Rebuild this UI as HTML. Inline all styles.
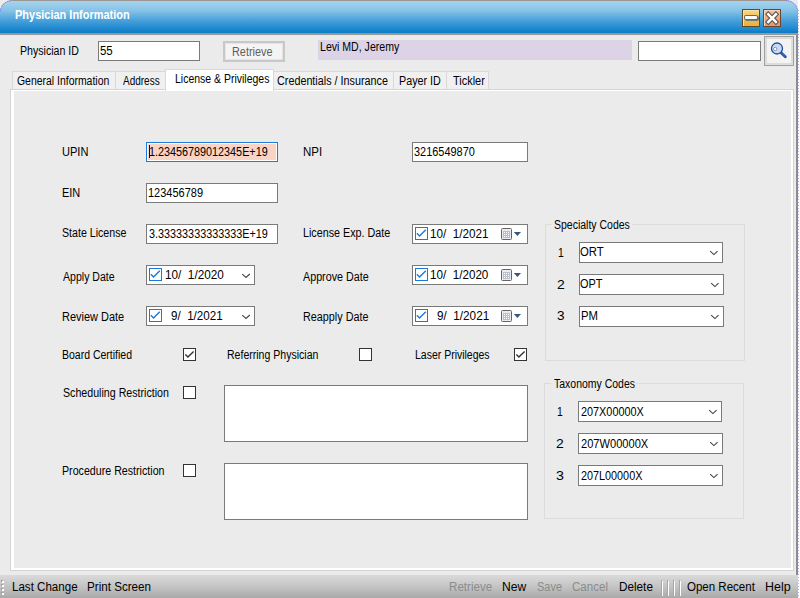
<!DOCTYPE html>
<html><head><meta charset="utf-8">
<style>
*{margin:0;padding:0;box-sizing:border-box}
html,body{width:800px;height:598px;overflow:hidden;background:#fff}
body{font-family:"Liberation Sans",sans-serif;font-size:12px;color:#000;position:relative}
.a{position:absolute}
.t{position:absolute;white-space:pre;line-height:16px;font-size:12px;transform-origin:0 0}
.tb{position:absolute;background:#fff;border:1px solid #7a7a7a}
.cb{position:absolute;width:13px;height:13px;border:1px solid #333;background:#fff}
.grp{position:absolute;border:1px solid #dcdcdc}
.tab{position:absolute;top:71px;height:19px;background:#f0f0f0;border:1px solid #d9d9d9;border-bottom:none}
</style></head><body>
<div class="a" style="left:0;top:0;width:798px;height:598px;background:#ebebeb"></div>
<div class="a" style="left:796px;top:33px;width:2px;height:544px;background:#8c8c8c"></div>
<div class="a" style="left:798px;top:8px;width:1px;height:590px;background:repeating-linear-gradient(#fff 0,#fff 2px,#b4b4f4 2px,#b4b4f4 3px)"></div>
<!-- title bar -->
<div class="a" style="left:0;top:0;width:798px;height:35px;border-top-left-radius:13px 12px;border-top-right-radius:13px 12px;background:#9a9692;overflow:hidden">
  <div class="a" style="left:0;top:1px;width:798px;height:32px;border-top-left-radius:12px 11px;border-top-right-radius:12px 11px;background:linear-gradient(#a6d4ee 0%,#86c3e6 30%,#459fda 62%,#0a7cc9 100%)"></div>
</div>
<svg class="a" style="left:0;top:0" width="16" height="16"><path d="M0.5 11.5 A12 11 0 0 1 12 0.5" fill="none" stroke="#7d7dff" stroke-width="1" stroke-dasharray="1.2 1.3"/></svg>
<svg class="a" style="left:782px;top:0" width="16" height="16"><path d="M3.5 0.5 A12 11 0 0 1 15.5 11.5" fill="none" stroke="#7d7dff" stroke-width="1" stroke-dasharray="1.2 1.3"/></svg>
<!-- min / close -->
<div class="a" style="left:742px;top:9px;width:18px;height:18px;background:linear-gradient(#f8d88a,#f0c050 50%,#e8b23e);border:1px solid #5e4a2a;box-shadow:inset 1px 1px 0 #fbe3a6"></div>
<div class="a" style="left:745px;top:16px;width:12px;height:3px;background:#fff;border-radius:1px;box-shadow:0 0 0 1px #6a6a6a, 1px 1px 0 1px #777"></div>
<div class="a" style="left:763px;top:9px;width:18px;height:18px;background:linear-gradient(#f7c09a,#eea67a 50%,#e89868);border:1px solid #6a4530;box-shadow:inset 1px 1px 0 #fad2b6"></div>
<svg class="a" style="left:763px;top:9px" width="18" height="18" viewBox="0 0 18 18"><path d="M5.3 5.3 L12.9 12.9 M12.9 5.3 L5.3 12.9" stroke="#505050" stroke-width="4.6" stroke-linecap="square"/><path d="M5.3 5.3 L12.9 12.9 M12.9 5.3 L5.3 12.9" stroke="#fff" stroke-width="2.6" stroke-linecap="square"/></svg>

<!-- header row -->
<div class="tb" style="left:98px;top:41px;width:102px;height:20px"></div>
<div class="a" style="left:223px;top:41px;width:62px;height:21px;border:2px solid #c8c8c8;background:#f4f4f4;box-shadow:inset 0 0 0 1px #e4e4e4"></div>
<div class="a" style="left:318px;top:40px;width:314px;height:20px;background:#dcd4e6"></div>
<div class="tb" style="left:638px;top:41px;width:123px;height:20px"></div>
<div class="a" style="left:764px;top:36px;width:30px;height:30px;border:1px solid #a0a0a0;background:#f3f3f3;box-shadow:inset 0 0 0 2px #dddddd"></div>
<svg class="a" style="left:766px;top:38px" width="26" height="26" viewBox="0 0 26 26"><circle cx="11" cy="10.5" r="5.5" fill="#d0d8ee" stroke="#1b5299" stroke-width="1.3"/><circle cx="9.2" cy="11" r="1.7" fill="#fff" stroke="#7d98cf" stroke-width="1"/><path d="M15.3 14.9 L19.3 18.7" stroke="#1b5299" stroke-width="2.8" stroke-linecap="round"/><path d="M15.8 15.4 L18.8 18.2" stroke="#5f82bb" stroke-width="0.8" stroke-linecap="round"/></svg>

<!-- tabs -->
<div class="tab" style="left:12px;width:104px"></div>
<div class="tab" style="left:115px;width:51px"></div>
<div class="tab" style="left:273px;width:121px"></div>
<div class="tab" style="left:393px;width:54px"></div>
<div class="tab" style="left:446px;width:43px"></div>
<!-- panel -->
<div class="a" style="left:10px;top:89px;width:784px;height:482px;border:1px solid #d4d4d4;background:#fff"></div>
<div class="a" style="left:14px;top:91px;width:777px;height:477px;background:#ebebeb"></div>
<div class="a" style="left:165px;top:69px;width:109px;height:22px;background:#fff;border:1px solid #d9d9d9;border-bottom:none"></div>

<!-- form -->
<div class="tb" style="left:146px;top:142px;width:132px;height:20px;background:#f9d3c4;border-color:#1a7ddf;box-shadow:inset 0 0 0 1px #fff"></div>
<div class="a" style="left:149px;top:145px;width:1px;height:13px;background:#111"></div>
<div class="tb" style="left:412px;top:142px;width:116px;height:20px"></div>
<div class="tb" style="left:146px;top:183px;width:132px;height:20px"></div>
<div class="tb" style="left:146px;top:224px;width:132px;height:20px"></div>

<div class="tb" style="left:412px;top:224px;width:116px;height:20px"></div>
<div class="tb" style="left:146px;top:265px;width:109px;height:20px"></div>
<div class="tb" style="left:412px;top:265px;width:116px;height:20px"></div>
<div class="tb" style="left:146px;top:306px;width:109px;height:20px"></div>
<div class="tb" style="left:412px;top:306px;width:116px;height:20px"></div>

<div class="cb" style="left:183px;top:348px"></div>
<div class="cb" style="left:359px;top:348px"></div>
<div class="cb" style="left:514px;top:348px"></div>
<div class="cb" style="left:183px;top:386px"></div>
<div class="tb" style="left:224px;top:385px;width:304px;height:57px"></div>
<div class="cb" style="left:183px;top:464px"></div>
<div class="tb" style="left:224px;top:463px;width:304px;height:57px"></div>

<div class="grp" style="left:545px;top:224px;width:200px;height:137px"></div>
<div class="a" style="left:552px;top:218px;width:80px;height:12px;background:#ebebeb"></div>
<div class="grp" style="left:544px;top:383px;width:200px;height:136px"></div>
<div class="a" style="left:551px;top:377px;width:85px;height:12px;background:#ebebeb"></div>

<div class="tb" style="left:579px;top:242px;width:144px;height:21px"></div>
<div class="tb" style="left:579px;top:274px;width:145px;height:21px"></div>
<div class="tb" style="left:579px;top:306px;width:145px;height:21px"></div>
<div class="tb" style="left:578px;top:401px;width:144px;height:21px"></div>
<div class="tb" style="left:578px;top:433px;width:145px;height:21px"></div>
<div class="tb" style="left:578px;top:465px;width:145px;height:21px"></div>

<!-- toolbar -->
<div class="a" style="left:0;top:575px;width:798px;height:23px;background:linear-gradient(#dadada,#c4c4c4 50%,#a9a9a9)"></div>

<!-- date checkboxes -->
<svg class="a" style="left:149px;top:268px" width="13" height="13"><rect x="0.5" y="0.5" width="12" height="12" fill="#fff" stroke="#1979d8"/><path d="M1.9 6.3 L4.5 8.9 L10.8 2.8" fill="none" stroke="#1979d8" stroke-width="1.4"/></svg>
<svg class="a" style="left:149px;top:309px" width="13" height="13"><rect x="0.5" y="0.5" width="12" height="12" fill="#fff" stroke="#1979d8"/><path d="M1.9 6.3 L4.5 8.9 L10.8 2.8" fill="none" stroke="#1979d8" stroke-width="1.4"/></svg>
<svg class="a" style="left:415px;top:227px" width="13" height="13"><rect x="0.5" y="0.5" width="12" height="12" fill="#fff" stroke="#1979d8"/><path d="M1.9 6.3 L4.5 8.9 L10.8 2.8" fill="none" stroke="#1979d8" stroke-width="1.4"/></svg>
<svg class="a" style="left:415px;top:268px" width="13" height="13"><rect x="0.5" y="0.5" width="12" height="12" fill="#fff" stroke="#1979d8"/><path d="M1.9 6.3 L4.5 8.9 L10.8 2.8" fill="none" stroke="#1979d8" stroke-width="1.4"/></svg>
<svg class="a" style="left:415px;top:309px" width="13" height="13"><rect x="0.5" y="0.5" width="12" height="12" fill="#fff" stroke="#1979d8"/><path d="M1.9 6.3 L4.5 8.9 L10.8 2.8" fill="none" stroke="#1979d8" stroke-width="1.4"/></svg>
<!-- checkmarks -->
<svg class="a" style="left:183px;top:348px" width="13" height="13"><path d="M2.4 6.5 L4.9 9.1 L10.6 3.4" fill="none" stroke="#333" stroke-width="1.4"/></svg>
<svg class="a" style="left:514px;top:348px" width="13" height="13"><path d="M2.4 6.5 L4.9 9.1 L10.6 3.4" fill="none" stroke="#333" stroke-width="1.4"/></svg>
<!-- chevrons -->
<svg class="a" style="left:240px;top:272px" width="12" height="8"><path d="M2.2 2.2 L6 5.4 L9.8 2" fill="none" stroke="#444" stroke-width="1.1"/></svg>
<svg class="a" style="left:240px;top:313px" width="12" height="8"><path d="M2.2 2.2 L6 5.4 L9.8 2" fill="none" stroke="#444" stroke-width="1.1"/></svg>
<svg class="a" style="left:708px;top:249px" width="12" height="8"><path d="M2.2 2.1 L5.9 5.6 L9.6 2.1" fill="none" stroke="#444" stroke-width="1.1"/></svg>
<svg class="a" style="left:709px;top:281px" width="12" height="8"><path d="M2.2 2.1 L5.9 5.6 L9.6 2.1" fill="none" stroke="#444" stroke-width="1.1"/></svg>
<svg class="a" style="left:709px;top:313px" width="12" height="8"><path d="M2.2 2.1 L5.9 5.6 L9.6 2.1" fill="none" stroke="#444" stroke-width="1.1"/></svg>
<svg class="a" style="left:707px;top:408px" width="12" height="8"><path d="M2.2 2.1 L5.9 5.6 L9.6 2.1" fill="none" stroke="#444" stroke-width="1.1"/></svg>
<svg class="a" style="left:708px;top:440px" width="12" height="8"><path d="M2.2 2.1 L5.9 5.6 L9.6 2.1" fill="none" stroke="#444" stroke-width="1.1"/></svg>
<svg class="a" style="left:708px;top:472px" width="12" height="8"><path d="M2.2 2.1 L5.9 5.6 L9.6 2.1" fill="none" stroke="#444" stroke-width="1.1"/></svg>
<!-- calendar icons -->
<svg class="a" style="left:500px;top:227px" width="24" height="14"><rect x="1.5" y="1.5" width="10" height="11" rx="1" fill="#e8ecf4" stroke="#6e625e"/><rect x="3" y="4" width="7" height="7" fill="#b9bec8"/><path d="M4 5h1v1h-1zM6 5h1v1h-1zM8 5h1v1h-1zM4 7h1v1h-1zM6 7h1v1h-1zM8 7h1v1h-1zM4 9h1v1h-1zM6 9h1v1h-1zM8 9h1v1h-1z" fill="#fff"/><path d="M13.8 5 L21 5 L17.4 9 Z" fill="#3a5580"/></svg>
<svg class="a" style="left:500px;top:268px" width="24" height="14"><rect x="1.5" y="1.5" width="10" height="11" rx="1" fill="#e8ecf4" stroke="#6e625e"/><rect x="3" y="4" width="7" height="7" fill="#b9bec8"/><path d="M4 5h1v1h-1zM6 5h1v1h-1zM8 5h1v1h-1zM4 7h1v1h-1zM6 7h1v1h-1zM8 7h1v1h-1zM4 9h1v1h-1zM6 9h1v1h-1zM8 9h1v1h-1z" fill="#fff"/><path d="M13.8 5 L21 5 L17.4 9 Z" fill="#3a5580"/></svg>
<svg class="a" style="left:500px;top:309px" width="24" height="14"><rect x="1.5" y="1.5" width="10" height="11" rx="1" fill="#e8ecf4" stroke="#6e625e"/><rect x="3" y="4" width="7" height="7" fill="#b9bec8"/><path d="M4 5h1v1h-1zM6 5h1v1h-1zM8 5h1v1h-1zM4 7h1v1h-1zM6 7h1v1h-1zM8 7h1v1h-1zM4 9h1v1h-1zM6 9h1v1h-1zM8 9h1v1h-1z" fill="#fff"/><path d="M13.8 5 L21 5 L17.4 9 Z" fill="#3a5580"/></svg>
<!-- toolbar separators & gripper -->
<div class="a" style="left:661px;top:580px;width:1px;height:16px;background:#a6a6a6"></div><div class="a" style="left:662px;top:581px;width:1px;height:15px;background:#fff"></div>
<div class="a" style="left:667px;top:580px;width:1px;height:16px;background:#a6a6a6"></div><div class="a" style="left:668px;top:581px;width:1px;height:15px;background:#fff"></div>
<div class="a" style="left:673px;top:580px;width:1px;height:16px;background:#a6a6a6"></div><div class="a" style="left:674px;top:581px;width:1px;height:15px;background:#fff"></div>
<div class="a" style="left:679px;top:580px;width:1px;height:16px;background:#a6a6a6"></div><div class="a" style="left:680px;top:581px;width:1px;height:15px;background:#fff"></div>
<div class="a" style="left:1px;top:580px;width:2px;height:2px;background:#a0a0a0"></div><div class="a" style="left:2px;top:581px;width:2px;height:2px;background:#fff"></div>
<div class="a" style="left:1px;top:584px;width:2px;height:2px;background:#a0a0a0"></div><div class="a" style="left:2px;top:585px;width:2px;height:2px;background:#fff"></div>
<div class="a" style="left:1px;top:588px;width:2px;height:2px;background:#a0a0a0"></div><div class="a" style="left:2px;top:589px;width:2px;height:2px;background:#fff"></div>
<div class="a" style="left:1px;top:592px;width:2px;height:2px;background:#a0a0a0"></div><div class="a" style="left:2px;top:593px;width:2px;height:2px;background:#fff"></div>
<div class="t" style="left:15.18px;top:7px;transform:scaleX(0.9153);color:#fff;font-weight:700;">Physician Information</div>
<div class="t" style="left:20.25px;top:43px;transform:scaleX(0.8836);color:#000;font-weight:400;">Physician ID</div>
<div class="t" style="left:100.18px;top:43px;transform:scaleX(0.9550);color:#000;font-weight:400;">55</div>
<div class="t" style="left:232.30px;top:44px;transform:scaleX(0.9046);color:#5e5e5e;font-weight:400;">Retrieve</div>
<div class="t" style="left:320.25px;top:39px;transform:scaleX(0.8805);color:#000;font-weight:400;">Levi MD, Jeremy</div>
<div class="t" style="left:16.92px;top:73px;transform:scaleX(0.8698);color:#000;font-weight:400;">General Information</div>
<div class="t" style="left:122.62px;top:73px;transform:scaleX(0.8321);color:#000;font-weight:400;">Address</div>
<div class="t" style="left:175.25px;top:71px;transform:scaleX(0.8734);color:#000;font-weight:400;">License &amp; Privileges</div>
<div class="t" style="left:276.82px;top:73px;transform:scaleX(0.8988);color:#000;font-weight:400;">Credentials / Insurance</div>
<div class="t" style="left:399.00px;top:73px;transform:scaleX(0.8947);color:#000;font-weight:400;">Payer ID</div>
<div class="t" style="left:452.87px;top:73px;transform:scaleX(0.9118);color:#000;font-weight:400;">Tickler</div>
<div class="t" style="left:61.50px;top:144px;transform:scaleX(0.9217);color:#000;font-weight:400;">UPIN</div>
<div class="t" style="left:148.75px;top:144px;transform:scaleX(0.9003);color:#000;font-weight:400;">1.23456789012345E+19</div>
<div class="t" style="left:303.00px;top:144px;transform:scaleX(0.9571);color:#000;font-weight:400;">NPI</div>
<div class="t" style="left:414.40px;top:144px;transform:scaleX(0.9112);color:#000;font-weight:400;">3216549870</div>
<div class="t" style="left:61.50px;top:185px;transform:scaleX(0.9143);color:#000;font-weight:400;">EIN</div>
<div class="t" style="left:148.20px;top:185px;transform:scaleX(0.9157);color:#000;font-weight:400;">123456789</div>
<div class="t" style="left:61.92px;top:225px;transform:scaleX(0.8853);color:#000;font-weight:400;">State License</div>
<div class="t" style="left:148.90px;top:226px;transform:scaleX(0.9017);color:#000;font-weight:400;">3.33333333333333E+19</div>
<div class="t" style="left:303.00px;top:225px;transform:scaleX(0.8960);color:#000;font-weight:400;">License Exp. Date</div>
<div class="t" style="left:430.25px;top:226px;transform:scaleX(0.9748);color:#000;font-weight:400;">10/  1/2021</div>
<div class="t" style="left:62.68px;top:269px;transform:scaleX(0.8799);color:#000;font-weight:400;">Apply Date</div>
<div class="t" style="left:164.80px;top:267px;transform:scaleX(0.9794);color:#000;font-weight:400;">10/  1/2020</div>
<div class="t" style="left:303.40px;top:269px;transform:scaleX(0.8944);color:#000;font-weight:400;">Approve Date</div>
<div class="t" style="left:430.25px;top:267px;transform:scaleX(0.9718);color:#000;font-weight:400;">10/  1/2020</div>
<div class="t" style="left:61.50px;top:309px;transform:scaleX(0.9142);color:#000;font-weight:400;">Review Date</div>
<div class="t" style="left:171.04px;top:308px;transform:scaleX(0.9685);color:#000;font-weight:400;">9/  1/2021</div>
<div class="t" style="left:303.00px;top:309px;transform:scaleX(0.9000);color:#000;font-weight:400;">Reapply Date</div>
<div class="t" style="left:436.73px;top:308px;transform:scaleX(0.9776);color:#000;font-weight:400;">9/  1/2021</div>
<div class="t" style="left:62.30px;top:347px;transform:scaleX(0.8742);color:#000;font-weight:400;">Board Certified</div>
<div class="t" style="left:227.00px;top:347px;transform:scaleX(0.8781);color:#000;font-weight:400;">Referring Physician</div>
<div class="t" style="left:415.00px;top:347px;transform:scaleX(0.8740);color:#000;font-weight:400;">Laser Privileges</div>
<div class="t" style="left:63.01px;top:385px;transform:scaleX(0.8870);color:#000;font-weight:400;">Scheduling Restriction</div>
<div class="t" style="left:62.25px;top:463px;transform:scaleX(0.8884);color:#000;font-weight:400;">Procedure Restriction</div>
<div class="t" style="left:553.66px;top:217px;transform:scaleX(0.8744);color:#000;font-weight:400;">Specialty Codes</div>
<div class="t" style="left:558.00px;top:245px;transform:scaleX(0.8664);color:#000;font-weight:400;">1</div>
<div class="t" style="left:556.93px;top:277px;transform:scaleX(1.1637);color:#000;font-weight:400;">2</div>
<div class="t" style="left:556.98px;top:308px;transform:scaleX(1.1322);color:#000;font-weight:400;">3</div>
<div class="t" style="left:580.45px;top:244px;transform:scaleX(0.9431);color:#000;font-weight:400;">ORT</div>
<div class="t" style="left:580.45px;top:276px;transform:scaleX(0.9111);color:#000;font-weight:400;">OPT</div>
<div class="t" style="left:581.20px;top:308px;transform:scaleX(0.9437);color:#000;font-weight:400;">PM</div>
<div class="t" style="left:554.05px;top:376px;transform:scaleX(0.8734);color:#000;font-weight:400;">Taxonomy Codes</div>
<div class="t" style="left:557.10px;top:404px;transform:scaleX(0.8664);color:#000;font-weight:400;">1</div>
<div class="t" style="left:555.93px;top:436px;transform:scaleX(1.1637);color:#000;font-weight:400;">2</div>
<div class="t" style="left:556.48px;top:468px;transform:scaleX(1.1914);color:#000;font-weight:400;">3</div>
<div class="t" style="left:580.90px;top:404px;transform:scaleX(0.9051);color:#000;font-weight:400;">207X00000X</div>
<div class="t" style="left:580.73px;top:436px;transform:scaleX(0.9240);color:#000;font-weight:400;">207W00000X</div>
<div class="t" style="left:580.90px;top:468px;transform:scaleX(0.9016);color:#000;font-weight:400;">207L00000X</div>
<div class="t" style="left:11.50px;top:579px;transform:scaleX(0.9638);color:#000;font-weight:400;">Last Change</div>
<div class="t" style="left:87.00px;top:579px;transform:scaleX(0.9692);color:#000;font-weight:400;">Print Screen</div>
<div class="t" style="left:448.50px;top:579px;transform:scaleX(0.9667);color:#8c8c8c;font-weight:400;">Retrieve</div>
<div class="t" style="left:501.50px;top:579px;transform:scaleX(1.0044);color:#000;font-weight:400;">New</div>
<div class="t" style="left:536.50px;top:579px;transform:scaleX(0.9148);color:#8c8c8c;font-weight:400;">Save</div>
<div class="t" style="left:572.29px;top:579px;transform:scaleX(0.9625);color:#8c8c8c;font-weight:400;">Cancel</div>
<div class="t" style="left:618.50px;top:579px;transform:scaleX(0.9775);color:#000;font-weight:400;">Delete</div>
<div class="t" style="left:686.77px;top:579px;transform:scaleX(0.9595);color:#000;font-weight:400;">Open Recent</div>
<div class="t" style="left:765.25px;top:579px;transform:scaleX(1.0360);color:#000;font-weight:400;">Help</div>
</body></html>
